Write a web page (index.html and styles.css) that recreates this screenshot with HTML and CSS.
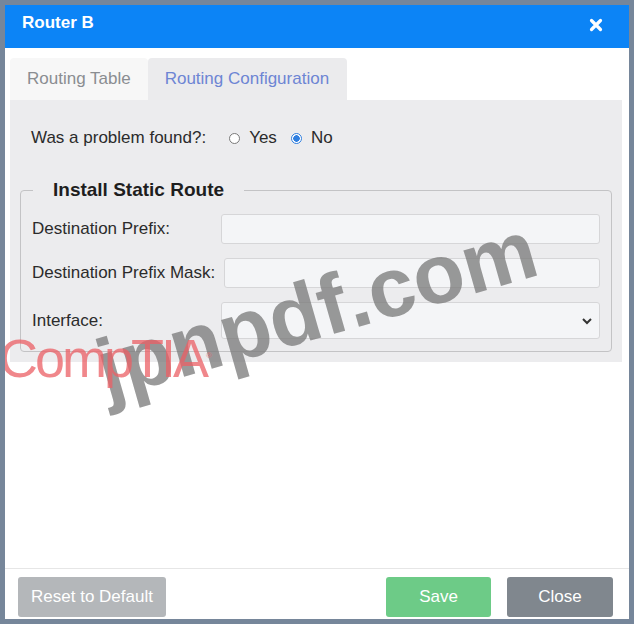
FILE: index.html
```html
<!DOCTYPE html>
<html lang="en">
<head>
    <meta charset="UTF-8">
    <title>Router B</title>
    <link rel="stylesheet" href="styles.css">
</head>
<body>
    <div class="dialog">
        <div class="dialog-header">
            <span class="dialog-title">Router B</span>
            <svg class="close-x" width="14" height="14" viewBox="0 0 14 14">
                <path d="M2.5 2.5 L11.5 11.5 M11.5 2.5 L2.5 11.5" stroke="#fff" stroke-width="3.2" stroke-linecap="round"/>
            </svg>
        </div>

        <div class="tabs">
            <div class="tab">Routing Table</div>
            <div class="tab tab-active">Routing Configuration</div>
        </div>

        <div class="panel">
            <div class="problem-row">
                <span class="problem-label">Was a problem found?:</span>
                <label class="radio"><span class="radio-dot"></span>Yes</label>
                <label class="radio"><span class="radio-dot checked"></span>No</label>
            </div>

            <fieldset class="route-box">
                <legend>Install Static Route</legend>
                <div class="field">
                    <span class="field-label">Destination Prefix:</span>
                    <input type="text" class="field-input">
                </div>
                <div class="field">
                    <span class="field-label">Destination Prefix Mask:</span>
                    <input type="text" class="field-input">
                </div>
                <div class="field field-select">
                    <span class="field-label">Interface:</span>
                    <div class="select-box">
                        <svg width="12" height="8" viewBox="0 0 12 8">
                            <path d="M2 2 L6 6 L10 2" fill="none" stroke="#333" stroke-width="2"/>
                        </svg>
                    </div>
                </div>
            </fieldset>
        </div>

        <div class="spacer"></div>

        <div class="dialog-footer">
            <button class="btn btn-reset">Reset to Default</button>
            <div class="footer-right">
                <button class="btn btn-save">Save</button>
                <button class="btn btn-close">Close</button>
            </div>
        </div>

        <div class="mark mark-site">jpnpdf.com</div>
        <div class="mark mark-brand">CompTIA<sup>®</sup></div>
    </div>
</body>
</html>
```

FILE: styles.css
```css
body {
    margin: 0;
    padding: 5px;
    background-color: #76869a;
    font-family: 'Liberation Sans', Arial, sans-serif;
}

.dialog {
    position: relative;
    width: 624px;
    height: 614px;
    background-color: #ffffff;
    display: flex;
    flex-direction: column;
    overflow: hidden;
}

.dialog-header {
    height: 43px;
    background-color: #0c84f6;
    display: flex;
    align-items: center;
    justify-content: space-between;
    padding: 0 26px 0 17px;
    flex-shrink: 0;
}

.dialog-title {
    color: #ffffff;
    font-weight: bold;
    font-size: 17px;
    margin-top: -8px;
}

.close-x {
    margin-top: -4px;
}

.tabs {
    display: flex;
    margin: 10px 0 0 5px;
    height: 42px;
    flex-shrink: 0;
}

.tab {
    padding: 0 17px;
    display: flex;
    align-items: center;
    font-size: 17px;
    color: #8a8d91;
    background-color: #f7f7f7;
    border-radius: 4px 4px 0 0;
}

.tab-active {
    width: 199px;
    box-sizing: border-box;
    color: #6d85d4;
    background-color: #ebebed;
}

.panel {
    margin: 0 7px 0 5px;
    background-color: #ececee;
    padding: 0 10px 10px 10px;
    height: 262px;
    box-sizing: border-box;
    flex-shrink: 0;
}

.problem-row {
    display: flex;
    align-items: center;
    height: 76px;
    padding-left: 11px;
    font-size: 17px;
    color: #2b2b2b;
}

.problem-label {
    margin-right: 23px;
}

.radio {
    display: flex;
    align-items: center;
    margin-right: 14px;
}

.radio-dot {
    width: 11px;
    height: 11px;
    border: 1px solid #7a7a7a;
    border-radius: 50%;
    background-color: #ffffff;
    margin-right: 9px;
    box-sizing: border-box;
}

.radio-dot.checked {
    border: 1px solid #2f7fe0;
    background: radial-gradient(circle, #2f7fe0 0 3px, #ffffff 3.5px);
}

.route-box {
    margin: 3px 0 0 0;
    border: 1px solid #c3c3c5;
    border-radius: 4px;
    padding: 13px 11px 10px 11px;
    height: 173px;
    box-sizing: border-box;
}

.route-box legend {
    font-weight: bold;
    font-size: 19px;
    color: #1e1e1e;
    padding: 0 20px;
    margin-left: 1px;
}

.field {
    display: flex;
    align-items: center;
    height: 30px;
    margin-bottom: 14px;
}

.field-label {
    width: 189px;
    font-size: 17px;
    color: #2b2b2b;
    flex-shrink: 0;
    white-space: nowrap;
}

.field-input {
    flex: 1;
    height: 30px;
    box-sizing: border-box;
    border: 1px solid #d6d6d8;
    border-radius: 3px;
    background-color: #f4f5f7;
    outline: none;
}

.field + .field .field-input {
    margin-left: 3px;
}

.field + .field.field-select {
    margin-top: 2px;
    height: 37px;
}

.select-box {
    flex: 1;
    height: 37px;
    box-sizing: border-box;
    border: 1px solid #d6d6d8;
    border-radius: 3px;
    background-color: #f4f5f7;
    display: flex;
    align-items: center;
    justify-content: flex-end;
    padding-right: 6px;
}

.spacer {
    flex: 1;
}

.dialog-footer {
    border-top: 1px solid #e6e6e6;
    display: flex;
    justify-content: space-between;
    padding: 8px 16px 2px 13px;
}

.footer-right {
    display: flex;
    gap: 16px;
}

.btn {
    height: 40px;
    border: none;
    border-radius: 3px;
    color: #ffffff;
    font-family: 'Liberation Sans', Arial, sans-serif;
    font-size: 17px;
}

.btn-reset {
    width: 148px;
    background-color: #b4b7ba;
}

.btn-save {
    width: 105px;
    background-color: #6dcb87;
}

.btn-close {
    width: 106px;
    background-color: #80878e;
}

.mark {
    position: absolute;
    pointer-events: none;
    white-space: nowrap;
}

.mark-site {
    left: 94px;
    top: 318px;
    font-size: 84px;
    font-weight: bold;
    color: rgba(120, 120, 120, 0.75);
    transform: rotate(-16deg);
    transform-origin: left center;
}

.mark-brand {
    left: -6px;
    top: 322px;
    font-size: 54px;
    color: rgba(235, 95, 100, 0.75);
    letter-spacing: -3px;
}

.mark-brand sup {
    font-size: 8px;
}
```
